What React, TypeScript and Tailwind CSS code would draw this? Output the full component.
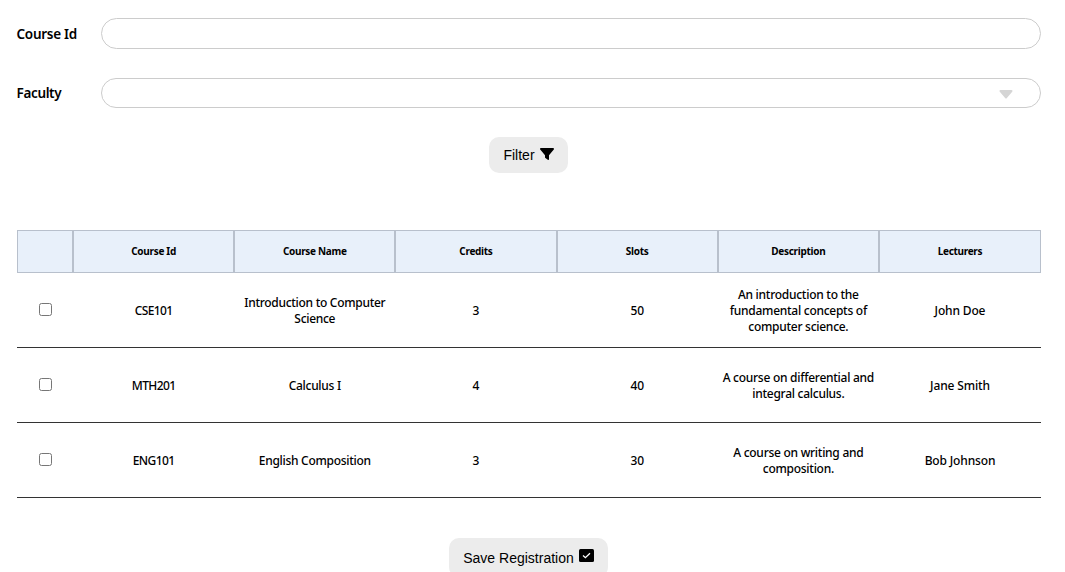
const columns = ['Course Id', 'Course Name', 'Credits', 'Slots', 'Description', 'Lecturers'];

const courses = [
  ['CSE101', 'Introduction to Computer Science', '3', '50', 'An introduction to the fundamental concepts of computer science.', 'John Doe'],
  ['MTH201', 'Calculus I', '4', '40', 'A course on differential and integral calculus.', 'Jane Smith'],
  ['ENG101', 'English Composition', '3', '30', 'A course on writing and composition.', 'Bob Johnson'],
];

const grid = 'grid grid-cols-[56px_repeat(5,161.2px)_minmax(0,1fr)]';

const tracking = [
  'tracking-[-0.6px]',
  'tracking-[-0.29px]',
  'tracking-normal',
  'tracking-[-0.3px]',
  'tracking-[-0.27px]',
  'tracking-[-0.15px]',
];

export default function App() {
  return (
    <main className="h-[572px] overflow-hidden bg-white pt-[18px] pr-6 pl-[17px] font-['Noto_Sans',sans-serif] text-black">
      <div className="flex h-[31px] items-center">
        <label className="-ml-[0.5px] w-[84.5px] pt-[2px] text-[13.5px] font-semibold tracking-[-0.27px]" htmlFor="course">Course Id</label>
        <input id="course" className="h-[31px] min-w-0 flex-1 rounded-full border border-[#cccccc] px-4" />
      </div>
      <div className="mt-[29px] flex h-[30px] items-center">
        <label className="-ml-[0.5px] w-[84.5px] pt-px text-[13.5px] font-semibold tracking-[-0.35px]">Faculty</label>
        <div className="flex h-[30px] flex-1 items-center justify-end rounded-full border border-[#cccccc] pr-[27.5px]">
          <svg className="mt-[2px] h-[9px] w-[14px]" viewBox="0 0 14 8" fill="#d5d5d5" preserveAspectRatio="none">
            <path d="M1.5 0h11c1 0 1.3.9.7 1.6L7.9 7.2c-.5.6-1.3.6-1.8 0L.8 1.6C.2.9.5 0 1.5 0Z" />
          </svg>
        </div>
      </div>
      <div className="mt-[29px] flex justify-center pr-px">
        <button className="flex h-9 w-[79px] items-center justify-center gap-[5px] rounded-[10px] bg-[#ececec] font-['Liberation_Sans',sans-serif] text-[14px]">
          <span className="pt-px">Filter</span>
          <svg className="mb-[3px] h-3 w-[14px]" viewBox="0 0 14 12">
            <path d="M.9 0h12.2c.8 0 1.2.9.7 1.5L9 7.2v4c0 .7-.7 1-1.2.6L5.4 10a1 1 0 0 1-.4-.8v-2L.2 1.5C-.3.9.1 0 .9 0Z" />
          </svg>
        </button>
      </div>

      <section className="mt-[57px]">
        <div className={`${grid} h-[43px] text-[10px] font-bold tracking-[-0.3px]`}>
          <div className="border border-[#b8c0cc] bg-[#e8f0fa]" />
          {columns.map((name) => (
            <div key={name} className="flex items-center justify-center border border-[#b8c0cc] bg-[#e8f0fa]">{name}</div>
          ))}
        </div>
        {courses.map((course) => (
          <div key={course[0]} className={`${grid} h-[75px] border-b border-[#333333] pt-px text-center text-[12px] leading-4 font-medium`}>
            <div className="flex items-center justify-center">
              <input type="checkbox" className="mb-[3px] ml-px size-[13px]" />
            </div>
            {course.map((value, i) => (
              <div key={i} className={`flex items-center justify-center px-[3px] ${tracking[i]}`}>{value}</div>
            ))}
          </div>
        ))}
      </section>

      <div className="mt-10 flex justify-center pr-px">
        <button className="flex h-[39px] w-[159px] shrink-0 items-center justify-center gap-[5px] rounded-[10px] bg-[#ececec] font-['Liberation_Sans',sans-serif] text-[14px]">
          <span className="pt-px whitespace-nowrap">Save Registration</span>
          <svg className="mb-1 h-[13px] w-[15px]" viewBox="0 0 15 13">
            <rect width="15" height="13" rx="1.5" />
            <path d="M4 6.5 6.4 8.7 11 4.3" fill="none" stroke="#fff" strokeWidth="1.3" />
          </svg>
        </button>
      </div>
    </main>
  );
}
